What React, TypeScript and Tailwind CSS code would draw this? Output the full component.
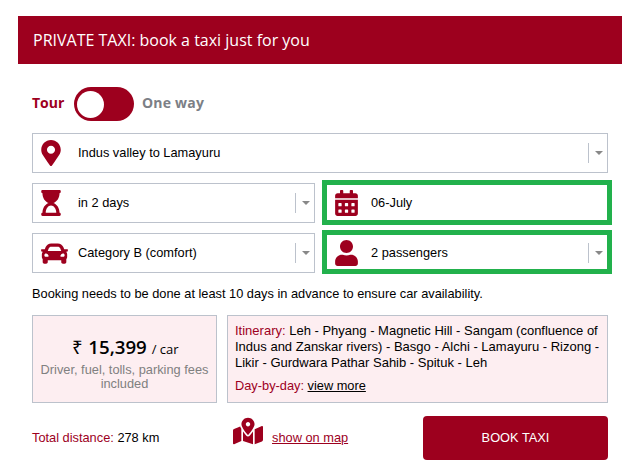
import { FaMapMarkerAlt, FaHourglassStart, FaCar, FaUser, FaCalendarAlt, FaMapMarkedAlt } from "react-icons/fa";
import type { ReactNode } from "react";

function Arrow() {
  return (
    <div className="flex h-[20px] w-[19px] shrink-0 items-center justify-center border-l border-[#bcc2cc]">
      <div className="ml-[1px] h-0 w-0 border-x-[4px] border-t-[4px] border-x-transparent border-t-[#888888]" />
    </div>
  );
}

function Field({ icon, label, arrow = true, className, iconW }: { icon: ReactNode; label: string; arrow?: boolean; className: string; iconW: string }) {
  return (
    <div className={`flex items-center ${className}`}>
      <div className={`flex shrink-0 justify-start text-[#9d001e] ${iconW}`}>{icon}</div>
      <div className="flex-1 text-[12.8px] text-black">{label}</div>
      {arrow && <Arrow />}
    </div>
  );
}

const plain = "h-[40px] border border-[#bcc2cc]";
const plainW = "w-[45px] pl-[8px]";
const greenW = "w-[44px] pl-[8px]";

export default function App() {
  return (
    <div className="h-[473px] w-[641px] bg-white pt-[16px] font-['Liberation_Sans',Arial,sans-serif]">
      <div className="ml-[18px] mr-[19px] flex h-[48px] items-center bg-[#9d001e] pl-[15px] font-['Open_Sans',sans-serif] text-[16px] text-white">
        PRIVATE TAXI: book a taxi just for you
      </div>
      <div className="pl-[32px] pr-[33px]">
        <div className="mt-[23px] flex h-[34px] items-center font-['Open_Sans',sans-serif] text-[14px] font-bold">
          <span className="mb-[4px] w-[42px] text-[#9d001e]">Tour</span>
          <div className="flex h-[34px] w-[60px] items-center rounded-full bg-[#9d001e] pl-[3px]">
            <div className="h-[27px] w-[27px] rounded-full bg-white" />
          </div>
          <span className="mb-[4px] ml-[8px] tracking-[0.2px] text-[#7c7f86]">One way</span>
        </div>
        <Field className={`mt-[12px] ${plain}`} iconW={plainW} icon={<FaMapMarkerAlt className="h-[26px] w-[20px]" />} label="Indus valley to Lamayuru" />
        <div className="mt-[7px] grid grid-cols-[283px_290px] gap-x-[7px] gap-y-[5px]">
          <Field className={`mt-[3px] ${plain}`} iconW={plainW} icon={<FaHourglassStart className="h-[26px] w-[20px]" />} label="in 2 days" />
          <Field className="h-[45px] border-[5px] border-[#22b14c]" iconW={greenW} icon={<FaCalendarAlt className="h-[26px] w-[23px]" />} label="06-July" arrow={false} />
          <Field className={`mt-[3px] ${plain}`} iconW={plainW} icon={<FaCar className="h-[27px] w-[27px]" />} label="Category B (comfort)" />
          <Field className="h-[44px] border-[5px] border-[#22b14c] pt-[1px]" iconW={greenW} icon={<FaUser className="h-[26px] w-[23px]" />} label="2 passengers" />
        </div>
        <p className="mt-[7px] text-[12.8px] leading-[26px] text-black">Booking needs to be done at least 10 days in advance to ensure car availability.</p>
        <div className="mt-[8px] flex h-[88px] gap-[10px] text-[12.8px]">
          <div className="w-[185px] border border-[#bcc2cc] bg-[#fdeef1] pt-[19px] text-center">
            <div className="pl-[2px] font-['Open_Sans',sans-serif] text-[18.7px] leading-[24px] text-black">
              ₹ <span className="font-semibold">15,399</span> <span className="text-[13px]">/ car</span>
            </div>
            <div className="mt-[2px] leading-[14px] text-[#808080]">Driver, fuel, tolls, parking fees<br />included</div>
          </div>
          <div className="flex-1 border border-[#bcc2cc] bg-[#fdeef1] px-[7px] pt-[7px] leading-[16px] text-black">
            <div className="text-[13px]">
              <span className="text-[#9d001e]">Itinerary: </span>
              Leh - Phyang - Magnetic Hill - Sangam (confluence of Indus and Zanskar rivers) - Basgo - Alchi - Lamayuru - Rizong - Likir - Gurdwara Pathar Sahib - Spituk - Leh
            </div>
            <div className="mt-[7px]">
              <span className="text-[#9d001e]">Day-by-day: </span>
              <span className="underline">view more</span>
            </div>
          </div>
        </div>
        <div className="mt-[13px] flex h-[44px] items-center text-[12.8px]">
          <div className="w-[201px]">
            <span className="text-[#9d001e]">Total distance: </span>278 km
          </div>
          <FaMapMarkedAlt className="mb-[14px] size-[30px] text-[#9d001e]" />
          <span className="ml-[9px] text-[#9d001e] underline">show on map</span>
          <div className="ml-auto flex h-[44px] w-[185px] items-center justify-center rounded-[4px] bg-[#9d001e] text-[12.8px] text-white">BOOK TAXI</div>
        </div>
      </div>
    </div>
  );
}
